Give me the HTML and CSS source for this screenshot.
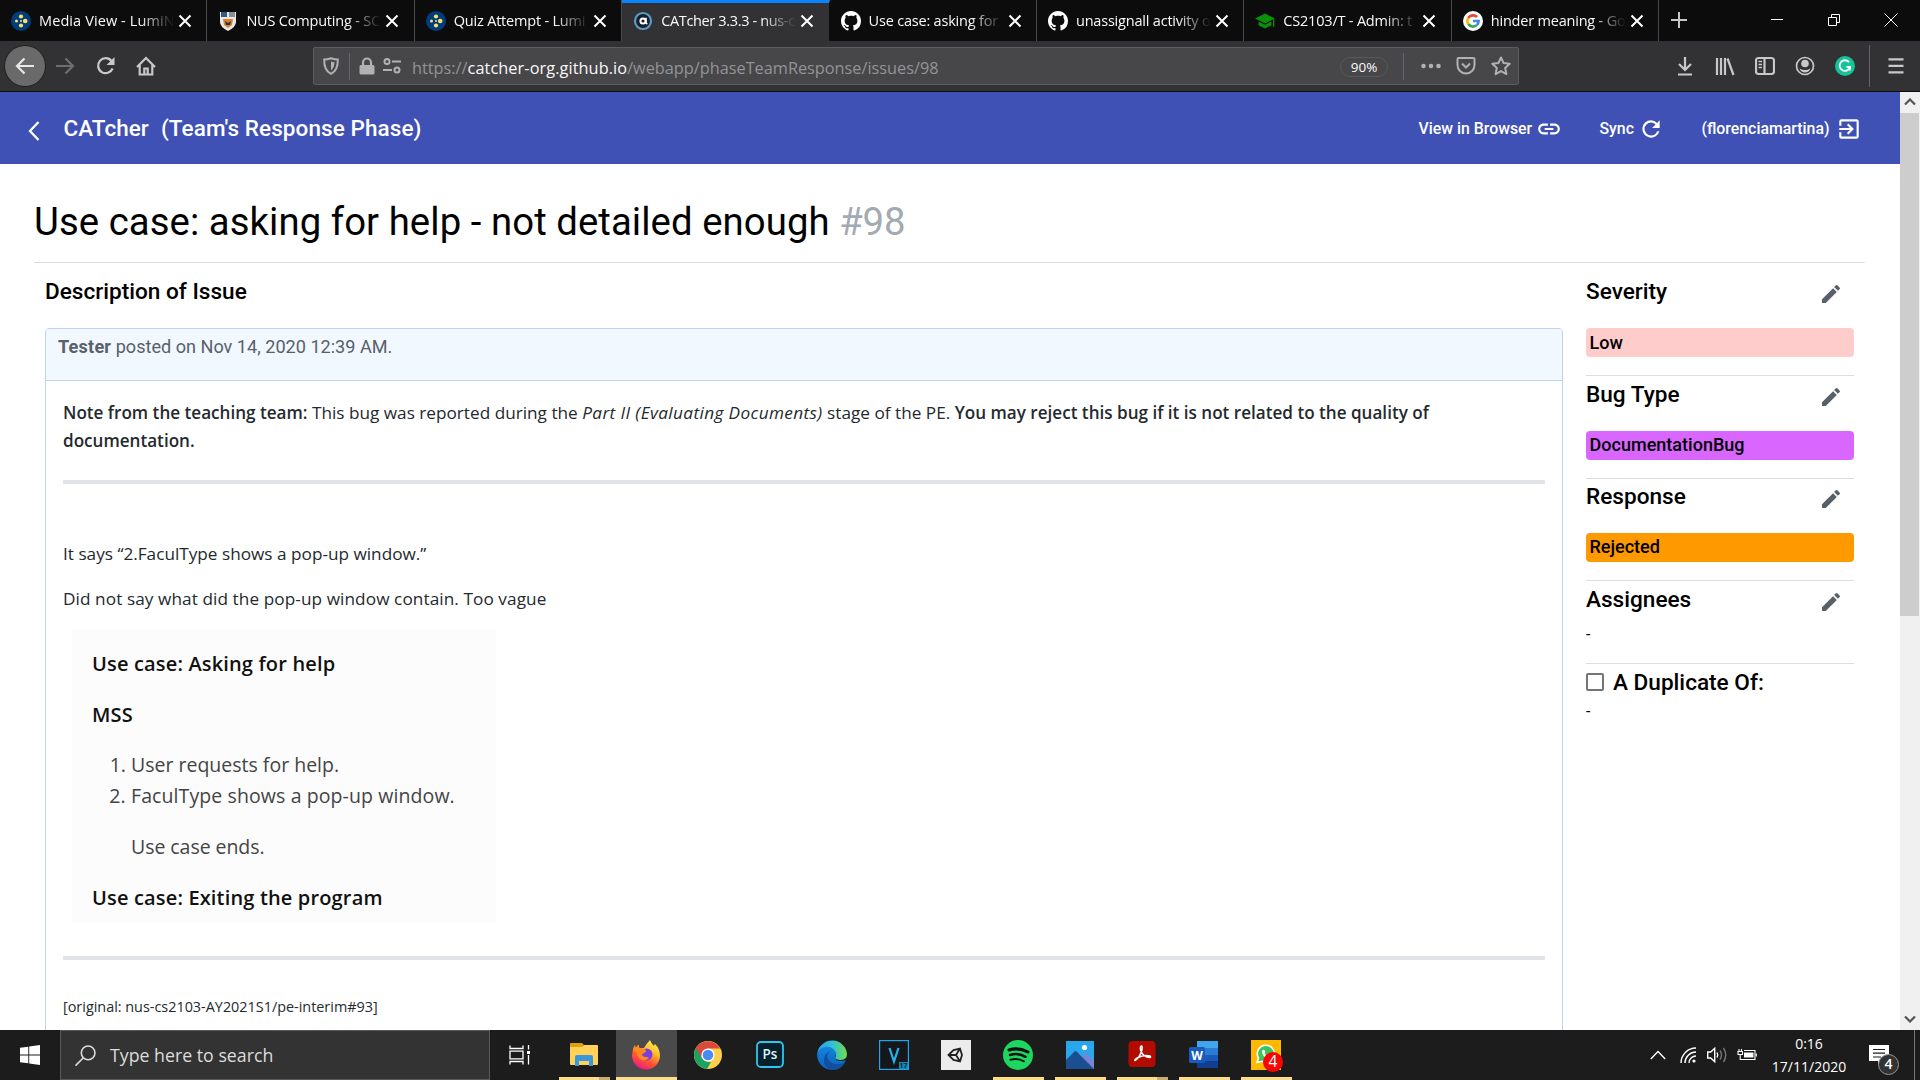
FILE: index.html
```html
<!DOCTYPE html>
<html lang="en">
<head>
<meta charset="utf-8">
<title>CATcher 3.3.3</title>
<link rel="stylesheet" href="styles.css">
</head>
<body>
<svg width="0" height="0" class="defs">
  <symbol id="x" viewBox="0 0 14 14"><path d="M1.5 1.5l11 11M12.5 1.5l-11 11" stroke="#fff" stroke-width="2" fill="none"/></symbol>
  <symbol id="lumi" viewBox="0 0 20 20"><circle cx="10" cy="10" r="10" fill="#003d7c"/><g fill="#ffe066"><circle cx="10" cy="5.500" r="2.100"/><circle cx="10" cy="14.500" r="2.100"/><circle cx="5.500" cy="10" r="1.500"/><circle cx="14.200" cy="10" r="2.300"/><circle cx="10" cy="10" r="1"/></g></symbol>
  <symbol id="github" viewBox="0 0 16 16"><path fill="#fff" d="M8 0C3.58 0 0 3.58 0 8c0 3.54 2.29 6.53 5.47 7.59.4.07.55-.17.55-.38 0-.19-.01-.82-.01-1.49-2.01.37-2.53-.49-2.69-.94-.09-.23-.48-.94-.82-1.13-.28-.15-.68-.52-.01-.53.63-.01 1.08.58 1.23.82.72 1.21 1.87.87 2.33.66.07-.52.28-.87.51-1.07-1.78-.2-3.64-.89-3.64-3.95 0-.87.31-1.59.82-2.15-.08-.2-.36-1.02.08-2.12 0 0 .67-.21 2.2.82.64-.18 1.32-.27 2-.27s1.36.09 2 .27c1.53-1.04 2.2-.82 2.2-.82.44 1.1.16 1.92.08 2.12.51.56.82 1.27.82 2.15 0 3.07-1.87 3.75-3.65 3.95.29.25.54.73.54 1.48 0 1.07-.01 1.93-.01 2.2 0 .21.15.46.55.38A8.01 8.01 0 0 0 16 8c0-4.42-3.58-8-8-8z"/></symbol>
  <symbol id="pencil" viewBox="0 0 24 24"><path fill="#586069" d="M3 17.250V21h3.750L17.810 9.940l-3.750-3.750L3 17.250zM20.710 7.040a1 1 0 0 0 0-1.410l-2.340-2.340a1 1 0 0 0-1.410 0l-1.830 1.830 3.750 3.750 1.830-1.830z"/></symbol>
</svg>

<div class="tabs">
  <div class="tab"><svg class="fav"><use href="#lumi"/></svg><span class="name n1">Media View - LumiN</span><svg class="x"><use href="#x"/></svg></div>
  <div class="tab"><svg class="fav" viewBox="0 0 20 20"><path d="M2 1h16v10q0 5-8 9-8-4-8-9z" fill="#e8e8e8"/><path d="M3 1h6v5H3z" fill="#345a8a"/><path d="M11 1h6v5h-6z" fill="#8a8f96"/><path d="M5 8h10l-1 6-4 3-4-3z" fill="#d9822b"/><path d="M7 10l3 2 3-2-1 4H8z" fill="#26324a"/></svg><span class="name">NUS Computing - SC</span><svg class="x"><use href="#x"/></svg></div>
  <div class="tab"><svg class="fav"><use href="#lumi"/></svg><span class="name">Quiz Attempt - Lumi</span><svg class="x"><use href="#x"/></svg></div>
  <div class="tab active"><svg class="fav" viewBox="0 0 20 20"><circle cx="10" cy="10" r="8" fill="#16202a" stroke="#5b9bc4" stroke-width="2.200"/><circle cx="10" cy="10" r="2.600" fill="none" stroke="#fff" stroke-width="2"/><path d="M13 6.800v5q.3 1.300 1.500.6" fill="none" stroke="#fff" stroke-width="1.600"/></svg><span class="name n4">CATcher 3.3.3 - nus-c</span><svg class="x"><use href="#x"/></svg></div>
  <div class="tab"><svg class="fav"><use href="#github"/></svg><span class="name">Use case: asking for</span><svg class="x"><use href="#x"/></svg></div>
  <div class="tab"><svg class="fav"><use href="#github"/></svg><span class="name">unassignall activity o</span><svg class="x"><use href="#x"/></svg></div>
  <div class="tab"><svg class="fav" viewBox="0 0 20 20"><path d="M10 2.500L20 7.500 10 12.500 0 7.500zM3.500 10.500L10 13.700l6.500-3.200v3.700L10 17.500l-6.500-3.300zM18 8.500h1.300v7.500H18z" fill="#0a8f08"/></svg><span class="name">CS2103/T - Admin: t</span><svg class="x"><use href="#x"/></svg></div>
  <div class="tab"><svg class="fav" viewBox="0 0 20 20"><circle cx="10" cy="10" r="10" fill="#fff"/><g fill="none" stroke-width="2.600"><path d="M5.300 7A5.600 5.600 0 0 1 14 6" stroke="#ea4335"/><path d="M5.300 13A5.600 5.600 0 0 1 5.300 7" stroke="#fbbc05"/><path d="M13.800 14.100A5.600 5.600 0 0 1 5.300 13" stroke="#34a853"/><path d="M10 10h5.600a5.600 5.600 0 0 1-1.800 4.100" stroke="#4285f4"/></g></svg><span class="name">hinder meaning - Go</span><svg class="x"><use href="#x"/></svg></div>
  <svg class="plus" viewBox="0 0 18 18"><path d="M9 1v16M1 9h16" stroke="#c8c8c9" stroke-width="2"/></svg>
  <div class="winctl">
    <svg viewBox="0 0 14 14"><path d="M1 6.500h12" stroke="#fff"/></svg>
    <svg viewBox="0 0 14 14"><path d="M1.500 4.500h8v8h-8zM4.500 4.500v-3h8v8h-3" stroke="#fff" fill="none"/></svg>
    <svg viewBox="0 0 14 14"><path d="M.5.5l13 13M13.500.5l-13 13" stroke="#fff"/></svg>
  </div>
</div>

<div class="toolbar">
  <div class="nav">
    <span class="back"><svg viewBox="0 0 20 20"><path d="M19 10H2M9.500 2.500L2 10l7.500 7.500" /></svg></span>
    <span class="dim"><svg viewBox="0 0 20 20"><path d="M1 10h17M10.500 2.500L18 10l-7.500 7.500"/></svg></span>
    <span><svg viewBox="0 0 20 20"><path d="M16.600 12.500A7.500 7.500 0 1 1 15.500 5"/><path d="M18.500 1v8h-8z" fill="#c8c8c9" stroke="none"/></svg></span>
    <span><svg viewBox="0 0 20 20"><path d="M1 11L10 2l9 9M3.700 9v9.500h12.600V9M8.300 18v-5.500h3.400V18"/></svg></span>
  </div>
  <div class="url">
    <svg class="i" viewBox="0 0 18 18"><path d="M9 1.200q3.500 1.300 6.800 1.300.3 11-6.800 14.300Q1.900 13.500 2.200 2.500 5.500 2.500 9 1.200z" fill="none" stroke="#b1b1b3" stroke-width="2"/><path d="M9 4.500q2 .7 3.500.8-.2 6-3.500 8z" fill="#b1b1b3"/></svg>
    <i class="sep"></i>
    <svg class="i lock" viewBox="0 0 18 18"><path d="M5 8V5.500a4 4 0 0 1 8 0V8" fill="none" stroke="#b1b1b3" stroke-width="2.200"/><rect x="1.500" y="8" width="15" height="9.500" rx="1.500" fill="#b1b1b3"/></svg>
    <svg class="i perm" viewBox="0 0 18 18"><g fill="none" stroke="#b1b1b3" stroke-width="2"><circle cx="4" cy="4.500" r="2.500"/><path d="M9 4.500h9M0 13h9"/><circle cx="14" cy="13" r="2.500"/></g></svg>
    <span class="addr">https://<b>catcher-org.github.io</b>/webapp/phaseTeamResponse/issues/98</span>
    <span class="zoom">90%</span>
    <i class="sep"></i>
    <svg class="i dots" viewBox="0 0 20 20"><g fill="#b1b1b3"><circle cx="2.500" cy="10" r="2.300"/><circle cx="10" cy="10" r="2.300"/><circle cx="17.500" cy="10" r="2.300"/></g></svg>
    <svg class="i pocket" viewBox="0 0 20 20"><path d="M2.500 2h15q1 0 1 1v6a8.500 8.500 0 0 1-17 0V3q0-1 1-1zM6 7.500l4 4 4-4" fill="none" stroke="#b1b1b3" stroke-width="2"/></svg>
    <svg class="i star" viewBox="0 0 20 20"><path d="M10 1.500l2.600 5.600 6.100.7-4.500 4.200 1.200 6.100L10 15.100l-5.400 3 1.200-6.100L1.300 7.800l6.100-.7z" fill="none" stroke="#b1b1b3" stroke-width="2" stroke-linejoin="round"/></svg>
  </div>
  <div class="tools">
    <svg viewBox="0 0 20 20"><path d="M10 1v12M4 8l6 6 6-6M3 18.500h14"/></svg>
    <svg viewBox="0 0 20 20"><path d="M2 2v17M6 2v17M10 2v17M12.500 2.500l6 16.500"/></svg>
    <svg viewBox="0 0 20 20"><rect x="1" y="2" width="18" height="16" rx="2.500"/><path d="M9.500 2v16"/><path d="M3.500 5.500h3.500M3.500 8.500h3.500M3.500 11.500h3.500" stroke-width="1.300"/></svg>
    <svg viewBox="0 0 20 20"><circle cx="10" cy="10" r="8.500" stroke-width="1.700"/><circle cx="10" cy="7.500" r="3.800" fill="#c8c8c9" stroke="none"/><path d="M4.500 12.500q5.500 3 11 0-1.500 4-5.500 4t-5.500-4z" fill="#c8c8c9" stroke="none"/></svg>
    <svg viewBox="0 0 20 20"><circle cx="10" cy="10" r="10" fill="#15c39a" stroke="none"/><path d="M14 6.200A5.300 5.300 0 1 0 15 11h-3.500" stroke="#fff" stroke-width="1.800"/><path d="M15 10.500v4" stroke="#fff" stroke-width="1.600"/></svg>
    <i class="sep"></i>
    <svg class="menu" viewBox="0 0 20 20"><path d="M2.500 3.300h15M2.500 9.800h15M2.500 16.300h15"/></svg>
  </div>
</div>

<div class="page">
  <div class="view">
    <header class="appbar">
      <svg class="chev" viewBox="0 0 14 22"><path d="M11.500 2L3 11l8.500 9" fill="none" stroke="#fff" stroke-width="2.300"/></svg>
      <span class="brand">CATcher</span>
      <span class="phase">(Team's Response Phase)</span>
      <span class="act view-in">View in Browser<svg viewBox="0 0 24 24"><path d="M3.900 12c0-1.710 1.390-3.100 3.100-3.100h4V7H7c-2.760 0-5 2.240-5 5s2.240 5 5 5h4v-1.900H7c-1.710 0-3.100-1.390-3.100-3.100zM8 13h8v-2H8v2zm9-6h-4v1.900h4c1.710 0 3.100 1.390 3.100 3.100s-1.390 3.100-3.100 3.100h-4V17h4c2.760 0 5-2.240 5-5s-2.240-5-5-5z"/></svg></span>
      <span class="act sync">Sync<svg viewBox="0 0 24 24"><path d="M17.650 6.350A7.958 7.958 0 0 0 12 4a8 8 0 1 0 7.730 10h-2.080A5.990 5.990 0 0 1 12 18a6 6 0 1 1 0-12c1.660 0 3.140.69 4.220 1.780L13 11h7V4l-2.350 2.350z"/></svg></span>
      <span class="act user">(florenciamartina)<svg viewBox="0 0 24 24"><path d="M10.090 15.590L11.500 17l5-5-5-5-1.410 1.410L12.670 11H3v2h9.670l-2.580 2.590zM19 3H5a2 2 0 0 0-2 2v4h2V5h14v14H5v-4H3v4a2 2 0 0 0 2 2h14c1.100 0 2-.9 2-2V5c0-1.100-.9-2-2-2z"/></svg></span>
    </header>
    <main>
      <h1>Use case: asking for help - not detailed enough <span class="num">#98</span></h1>
      <div class="cols">
        <section class="issue">
          <h2>Description of Issue</h2>
          <article class="card">
            <div class="cardhead"><b>Tester</b> posted on Nov 14, 2020 12:39 AM.</div>
            <div class="md">
              <p class="note"><b>Note from the teaching team:</b> This bug was reported during the <em>Part II (Evaluating Documents)</em> stage of the PE. <b>You may reject this bug if it is not related to the quality of</b><br><b>documentation.</b></p>
              <hr>
              <p class="p1">It says “2.FaculType shows a pop-up window.”</p>
              <p class="p2">Did not say what did the pop-up window contain. Too vague</p>
              <figure class="shot">
                <h4>Use case: Asking for help</h4>
                <h4>MSS</h4>
                <ol>
                  <li class="req">User requests for help.</li>
                  <li>FaculType shows a pop-up window.<div class="ends">Use case ends.</div></li>
                </ol>
                <h4>Use case: Exiting the program</h4>
              </figure>
              <hr>
              <p class="orig">[original: nus-cs2103-AY2021S1/pe-interim#93]</p>
            </div>
          </article>
        </section>
        <aside class="side">
          <div class="sec"><h2>Severity<svg><use href="#pencil"/></svg></h2><div class="label low">Low</div></div>
          <div class="sec"><h2>Bug Type<svg><use href="#pencil"/></svg></h2><div class="label bug">DocumentationBug</div></div>
          <div class="sec tight"><h2>Response<svg><use href="#pencil"/></svg></h2><div class="label rej">Rejected</div></div>
          <div class="sec who"><h2>Assignees<svg><use href="#pencil"/></svg></h2><div class="none">-</div></div>
          <div class="sec dup"><h2><i class="box"></i>A Duplicate Of:</h2><div class="none">-</div></div>
        </aside>
      </div>
    </main>
  </div>
  <div class="scroll">
    <svg viewBox="0 0 12 8"><path d="M1 6.500l5-5 5 5" /></svg>
    <i class="thumb"></i>
    <svg class="down" viewBox="0 0 12 8"><path d="M1 1.500l5 5 5-5"/></svg>
  </div>
</div>

<div class="taskbar">
  <div class="start"><svg viewBox="0 0 20 20"><path fill="#fff" d="M0 2.800L8.300 1.700v7.800H0zM9.200 1.500L20 0v9.500H9.200zM0 10.500h8.300v7.800L0 17.200zM9.200 10.500H20V20L9.200 18.500z"/></svg></div>
  <div class="search"><svg viewBox="0 0 20 20"><circle cx="12.500" cy="7.500" r="6.500" fill="none" stroke="#ddd" stroke-width="1.500"/><path d="M8 12.200L.5 19.700" stroke="#ddd" stroke-width="1.500"/></svg><span>Type here to search</span></div>
  <div class="tview"><svg viewBox="0 0 22 20"><g fill="none" stroke="#fff" stroke-width="1.300"><path d="M1 .5v3h13v-3M1 19.500v-3h13v3M1 6.200h13v7.600H1zM19.500 0v4.500M19.500 10v9.500"/></g><path d="M18 6h3v3h-3z" fill="#fff"/></svg></div>
  <div class="apps">
    <div class="app run multi"><svg viewBox="0 0 30 30"><path d="M1 4q0-1 1-1h11l2 2-2 3H1z" fill="#e0a010"/><path d="M1 7h12l2-2h13q1 0 1 1v18q0 1-1 1H2q-1 0-1-1z" fill="#ffd257"/><path d="M6 26v-9q0-2 2-2h14q2 0 2 2v9h-4v-5h-10v5z" fill="#3a96dd"/></svg></div>
    <div class="app focus"><svg viewBox="0 0 30 30"><defs><linearGradient id="ff" x1=".8" y1="0" x2=".3" y2="1"><stop offset="0" stop-color="#fff04a"/><stop offset=".35" stop-color="#ffc02e"/><stop offset=".65" stop-color="#ff5a2c"/><stop offset="1" stop-color="#f0148a"/></linearGradient></defs><path d="M19 0Q20 3 23 6q0-1 1-2 5 5 5 11.500A14 14 0 0 1 1 15.500Q1 10 4 5q0 2 1 3Q6 5 8 5q-1 3 1 3h4q3-5 6-8z" fill="url(#ff)"/><circle cx="15.500" cy="14.500" r="6" fill="#7a3ee0"/><path d="M2 9q1-3 2-4 0 2 1 3 1-3 3-3-1 3 1 3 4 0 6 2 0 3-4 4 0 3 4 3 2 0 3 1-3 3-7 2-5-2-5-8z" fill="#ff8a1f"/></svg></div>
    <div class="app"><svg viewBox="0 0 30 30"><circle cx="15" cy="15" r="14" fill="#fdcf4a"/><path d="M15 8.500L4.500 20.500 2.900 8A14 14 0 0 1 27.200 8.500z" fill="#d9493c"/><path d="M2.900 8L9.400 18.500l5.600 3.500 3 0-4 7A14 14 0 0 1 2.900 8z" fill="#1da261"/><circle cx="15" cy="15" r="6.600" fill="#fff"/><circle cx="15" cy="15" r="5.300" fill="#4a8af4"/></svg></div>
    <div class="app"><svg viewBox="0 0 30 30"><rect x="2" y="2" width="26" height="25" rx="4" fill="#06202c" stroke="#31c5f0" stroke-width="1.800"/><text x="15" y="19" text-anchor="middle" class="pst">Ps</text></svg></div>
    <div class="app"><svg viewBox="0 0 30 30"><defs><linearGradient id="eg" x1="0" x2="1"><stop offset="0" stop-color="#2a9fe8"/><stop offset=".5" stop-color="#30c0d8"/><stop offset="1" stop-color="#70dc48"/></linearGradient><linearGradient id="eb" x1="0" x2="0" y1="0" y2="1"><stop offset="0" stop-color="#1488de"/><stop offset="1" stop-color="#0b62c0"/></linearGradient></defs><path d="M.3 13Q2 2 14 5q7 2 5 9-1 2-1 3 0 4 6 4 3 0 5-1-4 10-14 10A15 15 0 0 1 .3 13z" fill="url(#eb)"/><path d="M.3 13A15 15 0 0 1 30 14q0 6-7 6-7-1-4-4 1-3-1-5Q14 6 8 7 2 8 .3 13z" fill="url(#eg)"/><path d="M13 11Q9 14 11 19q3 6 11 5 4 0 6-2-4 8-13 8Q6 27 7 19q1-6 6-8z" fill="#124f9e"/></svg></div>
    <div class="app"><svg viewBox="0 0 30 30"><rect x=".6" y=".6" width="28.800" height="28.800" fill="#15171a" stroke="#1fa5ee" stroke-width="1.200"/><path d="M10.500 8L15 21.500 19.500 8" fill="none" stroke="#22b4f0" stroke-width="2.200"/><rect x="20" y="22" width="9" height="7" fill="#1688b8"/><text x="24.600" y="28.300" text-anchor="middle" class="vs">17</text></svg></div>
    <div class="app"><svg viewBox="0 0 30 30"><rect width="30" height="30" fill="#ececec"/><g fill="none" stroke="#222" stroke-width="1.800"><path d="M7.500 15l5-5 6.500-1.500 2 6.500-2 6.500-6.500-1.500zM7.500 15h7.500M15 15l4-6.500M15 15l4 6.500"/></g></svg></div>
    <div class="app run"><svg viewBox="0 0 30 30"><circle cx="15" cy="15" r="15" fill="#1ed760"/><g fill="none" stroke="#101010" stroke-linecap="round"><path d="M6 10q9.500-3 19 2" stroke-width="3"/><path d="M7 15q8-2.500 15.500 1.800" stroke-width="2.500"/><path d="M7.500 19.700q7-2 13.500 1.600" stroke-width="2"/></g></svg></div>
    <div class="app run"><svg viewBox="0 0 30 30"><path d="M1 1h28v28H1z" fill="#28a8ea"/><path d="M20 12l9 9v8H12z" fill="#7b83d8"/><path d="M1 20l8.500-8.500q1-1 2 0L29 29H1z" fill="#1b4f91"/><circle cx="19.500" cy="7.500" r="2.600" fill="#fff"/></svg></div>
    <div class="app run multi"><svg viewBox="0 0 30 30"><rect x="1.500" y="1" width="27" height="26" rx="4" fill="#b30b00"/><path d="M8 20.500q5-3 7-11 .5-3-.5-3.500-1.500 0-1 4 2.500 7 9 7.500 2 0 .5-1.500-6-1.500-13 2-3 2-2 2.500z" fill="none" stroke="#fff" stroke-width="1.500"/></svg></div>
    <div class="app run"><svg viewBox="0 0 30 30"><path d="M8 1h21v7H8z" fill="#41a5ee"/><path d="M8 8h21v7H8z" fill="#2b7cd3"/><path d="M8 15h21v6.500H8z" fill="#185abd"/><path d="M8 21.500h21V28H8z" fill="#103f91"/><rect y="7" width="16" height="16" rx="1.500" fill="#185abd"/><text x="8" y="19.500" text-anchor="middle" class="wt">W</text></svg></div>
    <div class="app run"><svg class="wa" viewBox="0 0 30 30"><path d="M0 0h30v30H0z" fill="#ffb900"/><path d="M6 22.500l1.500-4.500A8.500 8.500 0 1 1 11 21.300z" fill="#3bc45a" stroke="#fff" stroke-width="1.600"/><path d="M11.500 10q2-1 3 2l-1 1q1 2 3 3l1-1q3 1 2 3-5 2-8-4-1-2 0-4z" fill="#fff"/><circle cx="22" cy="22" r="10" fill="#f90404"/><text x="22" y="27" text-anchor="middle" class="wat">4</text></svg></div>
  </div>
  <div class="tray">
    <svg class="up" viewBox="0 0 16 10"><path d="M.8 9L8 1.500 15.200 9"/></svg>
    <svg class="wifi" viewBox="0 0 16 16"><g><path d="M1 16A15 15 0 0 1 16 1"/><path d="M5 16A11 11 0 0 1 16 5"/><path d="M9 16a7 7 0 0 1 7-7" /></g><circle cx="14" cy="14" r="1.600" fill="#fff" stroke="none"/></svg>
    <svg class="vol" viewBox="0 0 20 16"><path d="M.7 5h3l4-3.700v13.400L3.700 11h-3z"/><path d="M10 5.500q1.500 2.500 0 5"/><path d="M13 3.500q3 4.500 0 9M16.500 1q4.500 7 0 14" stroke="#777"/></svg>
    <svg class="bat" viewBox="0 0 20 14"><path d="M7 2.500h11v9H5" stroke-width="1.100"/><path d="M7 4.500h9.500v5H7z" fill="#fff" stroke="none"/><path d="M19.300 5.500v3M1 3.500h4.500v3H1zM2 1v2M4.500 1v2M3.200 7v4.500h2" stroke-width="1.100"/></svg>
    <div class="clock"><span>0:16</span><span>17/11/2020</span></div>
    <div class="notif"><svg viewBox="0 0 20 20"><path d="M0 0h20v16h-7l-4 4v-4H0z" fill="#fff" stroke="none"/><path d="M4 4.500h12M4 8.200h12M4 12h8" stroke="#1c1c1c" stroke-width="1.200"/></svg><b>4</b></div>
    <i class="peek"></i>
  </div>
</div>
</body>
</html>
```
FILE: styles.css
```css
* { box-sizing: border-box; }
body { margin: 0; width: 1920px; height: 1080px; overflow: hidden; display: flex; flex-direction: column; background: #fff; font-family: "Open Sans", "Noto Sans", sans-serif; color: #24292e; }
h1, h2, h4, p, ol, figure { margin: 0; padding: 0; }
svg { display: block; flex: none; }
.defs { position: absolute; }

/* browser tabs */
.tabs { display: flex; height: 41px; flex: none; background: #0c0c0d; }
.tab { width: 207.400px; height: 41px; flex: none; display: flex; align-items: center; padding-left: 11px; border-right: 1px solid #4a4a4c; }
.tab.active { background: #323234; border-right-color: #0c0c0d; border-top: 3px solid #0a84ff; }
.tab.active > * { margin-top: -3px; }
.fav { width: 20px; height: 20px; }
.name { width: 135px; margin-left: 8px; overflow: hidden; white-space: nowrap; font-size: 14.500px; letter-spacing: -.2px; line-height: 24px; color: #f9f9fa; -webkit-mask-image: linear-gradient(90deg, #000 75%, transparent 100%); mask-image: linear-gradient(90deg, #000 75%, transparent 100%); }
.name.n1 { letter-spacing: .1px; }
.name.n4 { letter-spacing: -.35px; }
.x { width: 14px; height: 14px; margin-left: 4px; }
.plus { width: 18px; height: 18px; margin: 11px 0 0 11px; }
.winctl { display: flex; gap: 43px; margin: 13px 22px 0 auto; }
.winctl svg { width: 14px; height: 14px; }

/* browser toolbar */
.toolbar { display: flex; align-items: center; height: 51px; flex: none; background: #323234; border-bottom: 1px solid #0c0c0d; }
.nav { display: flex; width: 313px; padding-left: 5px; }
.nav span { width: 40.500px; height: 40px; display: flex; align-items: center; justify-content: center; }
.nav svg, .tools svg { width: 20px; height: 20px; fill: none; stroke: #c8c8c9; stroke-width: 2.200; }
.nav .back { width: 40px; border-radius: 50%; background: #6a6a6b; box-shadow: 0 0 0 1px #222; }
.nav .back svg { stroke: #e8e8e8; }
.nav .dim svg { stroke: #6e6e70; }
.url { width: 1206px; height: 38px; display: flex; align-items: center; background: #474749; border: 1px solid #5c5c5e; border-radius: 2px; padding-left: 8px; }
.i { width: 18px; height: 18px; }
.sep { width: 1px; height: 27px; background: #5f6670; }
.url > .sep { margin-left: 9px; }
.lock { margin-left: 8px; }
.perm { margin-left: 7px; }
.addr { margin: 3px 0 0 11px; font-size: 16.300px; white-space: nowrap; color: #939395; line-height: 24px; }
.addr b { font-weight: 400; color: #f9f9fa; letter-spacing: .08px; }
.zoom { margin: 1px 0 0 auto; width: 48px; height: 20px; border: 1px solid #59595b; border-radius: 10px; font-size: 13.500px; line-height: 19px; text-align: center; color: #f9f9fa; }
.url .zoom + .sep { margin-left: 15px; }
.dots { width: 20px; height: 20px; margin-left: 17px; }
.pocket { width: 20px; height: 20px; margin-left: 15px; }
.star { width: 20px; height: 20px; margin: 0 7px 0 15px; }
.tools { display: flex; align-items: center; gap: 20px; margin-left: 156px; }
.tools .sep { height: 42px; margin-left: -6px; }
.tools .menu { margin-left: -4px; }

/* page */
.page { flex: 1; min-height: 0; display: flex; }
.view { width: 1900px; overflow: hidden; font-family: Roboto, sans-serif; color: #000; }
.scroll { width: 20px; background: #f0f0f0; display: flex; flex-direction: column; align-items: center; padding: 6px 1px 7px 0; }
.scroll svg { width: 12px; height: 8px; fill: none; stroke: #555; stroke-width: 2.200; }
.thumb { width: 19px; height: 503px; background: #cdcdcd; margin-top: 7px; }
.down { margin-top: auto; }
.appbar { height: 72px; background: #3f51b5; color: #fff; display: flex; align-items: center; font-weight: 500; font-size: 22.500px; white-space: nowrap; }
.chev { width: 14px; height: 22px; margin: 5px 0 0 27px; }
.brand { margin-left: 22.500px; width: 97.500px; letter-spacing: .02px; }
.phase { width: 1257.500px; letter-spacing: .08px; }
.act { display: flex; align-items: center; font-size: 15.850px; }
.act svg { width: 26px; height: 26px; fill: #fff; margin-top: 2px; }
.view-in { width: 181px; gap: 4px; }
.sync { width: 102px; gap: 4px; }
.user { gap: 6px; }
main { padding: 32px 35px 0 34px; }
h1 { height: 67px; line-height: 51px; font-size: 38.300px; letter-spacing: .07px; font-weight: 400; border-bottom: 1px solid #dedede; white-space: nowrap; }
.num { color: #a3aab1; letter-spacing: -.2px; }
.cols { display: flex; padding: 13px 11px 0; gap: 23px; }
.issue { width: 1518px; }
h2 { display: flex; align-items: center; height: 30px; margin-bottom: 22px; font-size: 22.600px; line-height: 28px; padding-top: 2px; font-weight: 500; }
.card { border: 1px solid #c0d3eb; border-radius: 4px 4px 0 0; height: 800px; }
.cardhead { height: 52px; padding: 6px 12px; background: #f1f8ff; border-bottom: 1px solid #c0d3eb; font-size: 18.100px; line-height: 24px; color: #586069; border-radius: 3px 3px 0 0; }
.cardhead b { letter-spacing: .2px; }
.md { padding: 18px 17px 0; font: 17.200px/28px "Open Sans", "Noto Sans", sans-serif; color: #24292e; }
.md b, h4 { font-weight: 600; }
.note { height: 81px; white-space: nowrap; }
.note b { font-size: 17.100px; }
.note em { letter-spacing: .38px; }
hr { height: 4px; border: 0; margin: 0; background: #e1e4e8; }
.p1 { margin-top: 56px; }
.p2 { margin-top: 17px; letter-spacing: .08px; }
.shot { width: 424px; height: 294px; margin: 16px 0 33px 9px; padding: 19px 20px 0; background: #fcfcfc; font-size: 19.500px; letter-spacing: .1px; line-height: 31px; white-space: nowrap; color: #444; }
h4 { color: #111; font-size: 20px; letter-spacing: .16px; line-height: 31px; margin-bottom: 20px; }
ol { padding-left: 39px; margin: -1px 0 20px; }
.req { letter-spacing: 0; }
.ends { margin-top: 20px; letter-spacing: -.05px; }
.orig { margin-top: 36px; font-size: 14.400px; line-height: 22px; }
.side { width: 268px; }
.sec { padding: 3px 0 18px; border-bottom: 1px solid #dedede; }
.sec:first-child { padding-top: 0; }
.sec.tight { padding-top: 2px; }
.sec h2 svg { width: 24px; height: 24px; margin: 3px 11px 0 auto; }
.label { height: 29px; border-radius: 4px; padding-left: 3.500px; font-size: 18.050px; line-height: 29px; font-weight: 500; }
.low { background: #ffcccc; }
.bug { background: #d966ff; line-height: 28px; }
.rej { background: #ff9900; line-height: 28px; }
.none { font-size: 15.750px; line-height: 24px; padding-top: 2px; height: 24px; }
.who h2 { margin-bottom: 7px; }
.dup { border: 0; }
.dup h2 { margin-bottom: 1px; padding-top: 1px; }
.box { width: 18px; height: 18px; border: 2px solid #757575; border-radius: 2px; margin: -1px 9px 0 0; }

/* taskbar */
.taskbar { height: 50px; flex: none; display: flex; background: #1c1c1c; color: #fff; }
.start { width: 60px; padding: 15px 20px; }
.start svg { width: 20px; height: 20px; }
.search { width: 430px; border: 1px solid #5a5a5a; background: #333; display: flex; align-items: center; padding-left: 14px; gap: 14px; font-size: 17.750px; color: #dcdcdc; line-height: 24px; }
.search svg { width: 21px; height: 21px; }
.tview { width: 63px; padding: 15px 0 0 19px; }
.tview svg { width: 22px; height: 20px; }
.apps { display: flex; }
.app { width: 62px; height: 50px; display: flex; justify-content: center; align-items: center; position: relative; }
.app svg { width: 30px; height: 30px; }
.app.run::after { content: ""; position: absolute; left: 6px; right: 5px; bottom: 0; height: 3px; background: #fddc8c; }
.app.multi::after { background: linear-gradient(90deg, #fddc8c 40px, #c9ae70 40px); }
.app.focus { background: linear-gradient(#4a4a4a 47px, #fddc8c 47px) 1px 0 / 61px 50px no-repeat; }
.pst { font: 600 13.500px "Open Sans", sans-serif; fill: #dff4fc; }
.vs { font: 700 7px Roboto, sans-serif; fill: #0d1a20; }
.wt { font: 700 12px "Open Sans", sans-serif; fill: #fff; }
.wa { overflow: visible; }
.wat { font: 15.500px "Open Sans", sans-serif; fill: #fff; }
.tray { display: flex; margin-left: auto; align-items: center; }
.tray svg { fill: none; stroke: #fff; stroke-width: 1.400; }
.up { width: 16px; height: 10px; margin-right: 14px; }
.wifi { width: 16px; height: 16px; margin-right: 11px; }
.vol { width: 20px; height: 16px; margin-right: 10px; }
.bat { width: 20px; height: 14px; margin-right: 14px; }
.clock { width: 76px; font-size: 14px; line-height: 23px; display: flex; flex-direction: column; align-items: center; white-space: nowrap; }
.notif { position: relative; width: 20px; height: 20px; margin-left: 22px; }
.notif svg { width: 20px; height: 20px; }
.notif b { position: absolute; left: 9px; top: 9px; width: 21px; height: 21px; border-radius: 50%; background: #333; border: 1px solid #999; font: 600 14px/18px "Open Sans", sans-serif; text-align: center; }
.peek { width: 1px; height: 50px; background: #777; margin: 0 5px 0 25px; }
```
